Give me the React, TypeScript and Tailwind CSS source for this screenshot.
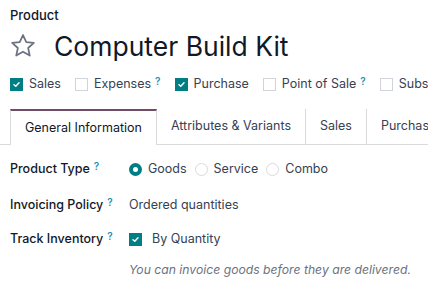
import React from 'react'

const Help = () => <sup className="ml-1 text-[10px] font-semibold text-[#1f8fb5] relative -top-[3px]">?</sup>

function Check({ checked }: { checked: boolean }) {
  return checked ? (
    <span className="w-[13px] h-[13px] bg-[#017e84] flex items-center justify-center shrink-0">
      <svg width="9" height="9" viewBox="0 0 10 10">
        <path d="M2.2 5.2 L4.2 7 L7.8 3" fill="none" stroke="white" strokeWidth="1.6" strokeLinecap="round" strokeLinejoin="round" />
      </svg>
    </span>
  ) : (
    <span className="w-[13px] h-[13px] border border-[#d1d5db] bg-white shrink-0" />
  )
}

function Radio({ checked }: { checked: boolean }) {
  return checked ? (
    <span className="w-[13px] h-[13px] rounded-full bg-[#017e84] flex items-center justify-center shrink-0">
      <span className="w-[5px] h-[5px] rounded-full bg-white" />
    </span>
  ) : (
    <span className="w-[13px] h-[13px] rounded-full border border-[#d8dadd] bg-white shrink-0" />
  )
}

export default function App() {
  const apps = [
    { name: 'Sales', checked: true, help: false },
    { name: 'Expenses', checked: false, help: true },
    { name: 'Purchase', checked: true, help: false },
    { name: 'Point of Sale', checked: false, help: true },
    { name: 'Subscriptions', checked: false, help: false },
  ]
  const tabs = ['General Information', 'Attributes & Variants', 'Sales', 'Purchase']
  return (
    <div className="w-[428px] h-[294px] overflow-hidden bg-white text-[12.5px] text-[#374151]" style={{ fontFamily: 'Inter, "Noto Sans", sans-serif' }}>
      <div className="pl-[10px] pt-[7px]">
        <div className="text-[13px] font-medium text-[#111827] leading-[16px]">Product</div>
        <div className="flex items-center mt-[5px] h-[36px]">
          <svg width="28" height="28" viewBox="0 0 24 24" className="ml-[-1px]">
            <path d="M12 2.6 L14.8 8.6 L21.3 9.3 L16.4 13.7 L17.8 20.2 L12 16.9 L6.2 20.2 L7.6 13.7 L2.7 9.3 L9.2 8.6 Z" fill="none" stroke="#6b7280" strokeWidth="1.5" strokeLinejoin="round" />
          </svg>
          <h1 className="ml-[17px] text-[26.5px] leading-[36px] text-[#111827] whitespace-nowrap">Computer Build Kit</h1>
        </div>
        <div className="flex items-center mt-[10px] h-[20px] whitespace-nowrap">
          {apps.map(a => (
            <div key={a.name} className="flex items-center shrink-0 mr-[14px]">
              <Check checked={a.checked} />
              <span className="ml-[6px] text-[#374151]">{a.name}</span>
              {a.help && <Help />}
            </div>
          ))}
        </div>
      </div>
      <div className="mt-[15px] flex border-b border-[#d8dadd] h-[36px] whitespace-nowrap">
        <div className="w-[10px] shrink-0" />
        {tabs.map((t, i) => (
          <div
            key={t}
            className={
              i === 0
                ? 'px-[14px] flex items-center shrink-0 border-l border-r border-t-2 border-t-[#714b67] border-l-[#d8dadd] border-r-[#d8dadd] bg-white -mb-px text-[#111827]'
                : 'px-[14px] flex items-center border-r border-[#d8dadd] text-[#374151] shrink-0'
            }
          >
            {t}
          </div>
        ))}
      </div>
      <div className="pl-[10px] pt-[14px]">
        <div className="flex items-center h-[20px]">
          <div className="w-[119px] font-medium text-[#111827]">Product Type<Help /></div>
          <div className="flex items-center">
            <Radio checked />
            <span className="ml-[6px] mr-[8px]">Goods</span>
            <Radio checked={false} />
            <span className="ml-[6px] mr-[8px]">Service</span>
            <Radio checked={false} />
            <span className="ml-[6px]">Combo</span>
          </div>
        </div>
        <div className="flex items-center h-[20px] mt-[16px]">
          <div className="w-[119px] font-medium text-[#111827]">Invoicing Policy<Help /></div>
          <div>Ordered quantities</div>
        </div>
        <div className="flex items-center h-[20px] mt-[14px]">
          <div className="w-[119px] font-medium text-[#111827]">Track Inventory<Help /></div>
          <Check checked />
          <span className="ml-[10px]">By Quantity</span>
        </div>
        <div className="ml-[119px] mt-[12px] italic text-[12.2px] text-[#6b7280] whitespace-nowrap">You can invoice goods before they are delivered.</div>
      </div>
    </div>
  )
}
